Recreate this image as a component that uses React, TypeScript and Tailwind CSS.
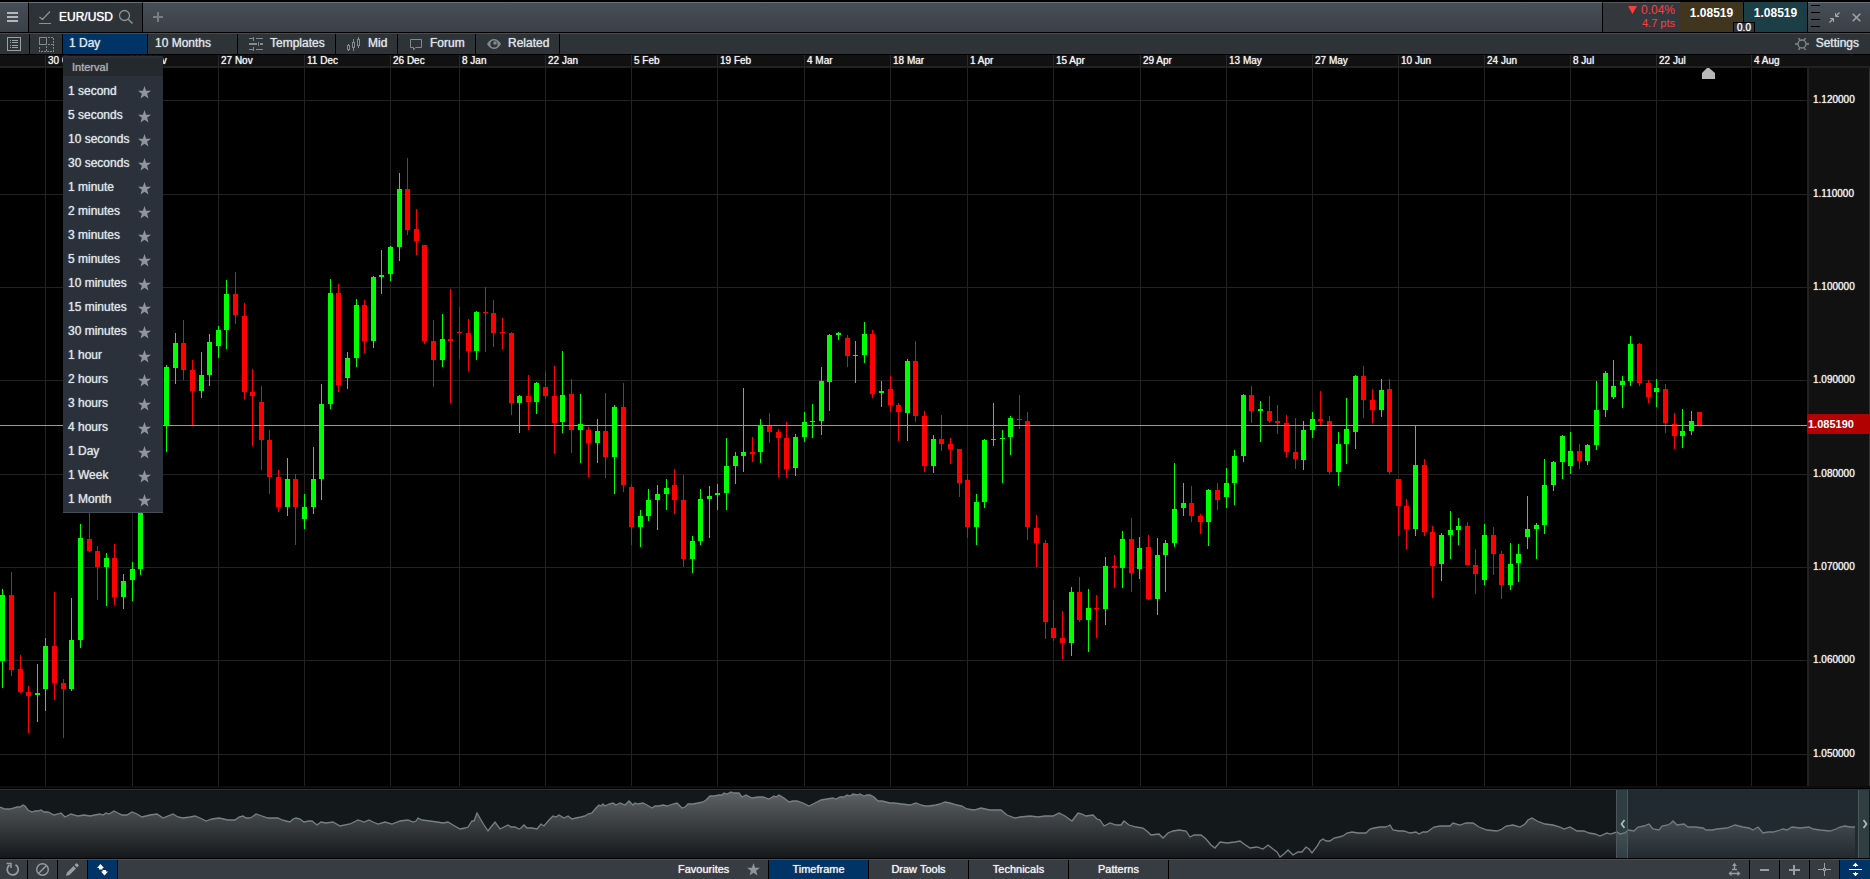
import React, { useState } from "react";

type Candle = { x: number; up: boolean; high: number; top: number; bottom: number; low: number };

const CHART_TOP = 68;
const CHART_WIDTH = 1807;
const CHART_HEIGHT = 718;

// direction,high,body top,body bottom,low
const CANDLE_DATA = `
g,589,595,661,688 r,572,595,670,676 r,655,669,692,693 r,686,692,696,733 g,664,693,695,722
g,638,646,689,711 r,592,646,683,700 r,679,683,689,738 g,598,640,689,691 g,524,538,640,648
r,500,539,551,552 r,546,551,567,600 g,553,558,567,606 r,544,558,597,605 g,574,581,597,609
g,562,569,580,601 g,476,490,569,575 r,420,450,470,490 g,400,425,460,480 g,365,367,425,452
g,333,343,368,384 r,320,343,370,380 r,360,370,391,425 g,352,375,391,398 g,334,342,375,386
g,326,330,346,358 g,280,294,330,349 r,272,294,315,324 r,303,316,392,399 r,369,392,396,446
r,386,402,440,470 r,430,440,477,494 r,470,477,507,512 g,458,479,507,516 r,474,479,507,545
g,494,507,519,529 g,447,479,507,514 g,384,404,479,500 g,279,293,404,409 r,284,293,385,392
g,352,358,378,389 g,299,305,358,367 r,300,305,341,353 g,276,277,341,348 g,250,275,277,294
g,246,247,274,281 g,173,189,247,261 r,158,189,230,235 r,209,229,241,255 r,245,245,341,344
r,320,341,360,387 g,314,339,360,367 r,289,339,341,403 r,307,332,333,359 r,319,333,351,371
g,311,312,351,360 r,287,312,313,352 r,300,313,333,347 r,318,332,333,349 r,332,333,403,415
g,395,396,403,433 r,375,396,402,430 g,382,383,402,414 r,372,387,396,399 r,366,396,423,454
g,351,395,422,433 r,379,394,430,453 g,394,424,430,463 r,427,430,443,477 g,419,431,443,463
r,393,431,457,478 g,405,407,457,494 r,383,407,485,492 r,484,487,527,545 g,510,516,527,547
g,489,500,516,521 g,485,494,500,530 g,479,488,494,510 r,469,485,500,514 r,475,500,559,567
g,536,541,559,573 g,489,499,541,545 g,486,496,499,538 g,484,493,495,510 g,438,466,493,510
g,452,456,466,484 g,388,452,456,472 r,437,452,454,462 g,419,425,452,463 r,413,426,432,443
r,429,432,438,477 r,422,438,469,478 g,434,437,468,476 g,412,422,437,442 g,404,421,422,438
g,367,381,421,435 g,334,335,382,411 g,332,333,335,340 r,335,338,356,367 g,341,355,356,383
g,322,334,355,363 r,330,334,394,398 g,381,391,393,407 r,376,389,405,412 r,403,405,412,441
g,359,361,413,441 r,341,361,416,422 r,411,416,466,472 g,435,439,466,473 r,415,439,444,451
r,438,444,449,464 r,449,449,483,497 r,474,480,527,538 g,494,502,527,545 g,439,440,502,508
g,403,439,440,446 g,430,438,439,483 g,416,418,437,455 r,395,419,420,429 r,412,421,527,540
r,515,528,543,567 r,540,543,622,639 r,600,628,638,641 r,611,638,643,659 g,587,592,643,656
r,577,592,620,622 g,589,608,620,652 r,595,608,609,638 g,557,566,609,625 r,555,566,568,588
g,531,539,568,588 r,518,539,573,592 g,537,548,569,579 r,535,547,599,600 g,538,555,599,615
g,540,543,555,592 g,463,509,543,547 g,483,503,508,516 r,486,503,516,522 r,514,516,522,534
g,489,490,522,546 r,483,490,500,510 g,468,483,497,508 g,450,456,483,505 g,394,395,456,462
r,386,395,411,423 g,401,409,411,442 r,396,411,421,423 r,405,421,423,434 r,415,423,452,457
r,418,452,459,469 g,421,430,460,470 g,412,419,430,438 r,391,419,421,425 r,416,421,472,474
g,432,444,472,486 g,398,429,444,464 g,375,376,432,449 r,366,376,400,418 r,389,400,410,423
g,379,390,410,417 r,379,389,472,474 r,479,479,506,536 r,499,506,529,549 g,426,465,529,536
r,459,465,532,536 r,526,532,566,598 g,533,535,564,581 g,511,530,535,559 g,518,526,530,545
r,522,526,565,565 r,549,565,574,594 g,524,535,580,585 r,527,535,554,575 r,551,554,585,599
g,543,564,585,590 g,544,554,563,582 g,496,529,537,549 g,523,525,529,559 g,459,485,525,534
g,461,462,485,491 g,435,436,462,479 g,432,451,466,474 r,444,451,461,469 g,444,445,461,465
g,381,410,445,450 g,371,373,410,417 g,360,386,397,399 g,376,381,385,408 g,336,344,381,386
r,343,344,383,386 r,380,383,397,403 g,379,388,392,407 r,384,389,423,433 r,413,424,436,449
g,409,431,436,448 g,411,421,431,435 r,412,412,425,425`;

const CANDLES: Candle[] = CANDLE_DATA.trim()
  .split(/\s+/)
  .map((entry, i) => {
    const [dir, high, top, bottom, low] = entry.split(",");
    return {
      x: Math.round(2.4 + i * 8.614),
      up: dir === "g",
      high: Number(high),
      top: Number(top),
      bottom: Number(bottom),
      low: Number(low),
    };
  });

const DATES: [number, string][] = [
  [45, "30 Oct"], [132, "13 Nov"], [218, "27 Nov"], [304, "11 Dec"], [390, "26 Dec"],
  [459, "8 Jan"], [545, "22 Jan"], [631, "5 Feb"], [717, "19 Feb"], [804, "4 Mar"],
  [890, "18 Mar"], [967, "1 Apr"], [1053, "15 Apr"], [1140, "29 Apr"], [1226, "13 May"],
  [1312, "27 May"], [1398, "10 Jun"], [1484, "24 Jun"], [1570, "8 Jul"], [1656, "22 Jul"],
  [1751, "4 Aug"],
];

const PRICES: [number, string][] = [
  [100, "1.120000"], [194, "1.110000"], [287, "1.100000"], [380, "1.090000"],
  [474, "1.080000"], [567, "1.070000"], [660, "1.060000"], [754, "1.050000"],
];

const DATE_COLUMNS = [DATES[0][0], ...DATES.map(([x], i) => (DATES[i + 1]?.[0] ?? 1870) - x)]
  .map((n) => `minmax(0,${n}fr)`)
  .join(" ");

const PRICE_ROWS = [
  PRICES[0][0] - CHART_TOP,
  ...PRICES.map(([y], i) => (PRICES[i + 1]?.[0] ?? CHART_TOP + CHART_HEIGHT) - y),
]
  .map((n) => `minmax(0,${n}fr)`)
  .join(" ");

const HISTORY: string = `
0,807 5,809 10,809 17,807 20,807 23,805 25,806 28,810 32,812 35,811 38,811 41,810 44,812 48,812 54,815 58,814 61,813 65,817
71,814 78,816 84,815 90,816 95,815 100,814 103,815 106,813 109,814 114,811 118,813 122,815 127,815 132,812 137,814 142,817 150,815 157,814 163,818
173,814 178,817 183,818 190,817 195,816 200,818 206,821 212,819 219,818 228,820 235,820 239,817 243,816 246,818 249,818 252,817 256,814 262,816
268,818 273,818 278,818 282,820 286,821 290,822 293,819 296,818 300,819 304,822 309,821 312,821 317,825 321,822 326,823 333,822 340,826 350,824
358,820 364,822 369,820 373,822 378,824 385,822 392,824 400,821 408,820 413,822 416,821 418,818 422,820 430,821 437,822 443,823 448,822 453,825
460,829 465,828 468,827 472,821 474,821 477,813 481,820 484,825 488,831 491,827 495,822 500,829 508,825 511,827 515,827 519,829 521,828 524,825
527,828 532,828 537,829 541,824 544,826 549,820 553,816 556,817 559,815 564,818 568,816 572,819 576,818 581,817 585,816 588,814 592,813 596,808
599,805 601,806 603,804 605,806 609,804 613,803 616,805 620,803 625,805 629,801 633,805 635,803 638,804 643,803 647,805 652,808 655,806 659,806 663,805
667,806 673,804 677,803 682,808 685,807 688,804 693,804 698,803 703,802 706,800 710,796 714,796 719,795 722,795 724,793 727,794 731,792 734,793 739,793
742,797 746,795 752,798 758,797 763,797 769,799 774,796 776,797 779,795 784,798 789,802 793,801 797,801 803,803 809,806 815,803 821,800 827,799 833,798
836,799 840,797 844,797 847,795 850,796 853,794 857,795 860,794 864,796 867,795 870,795 874,797 878,801 882,801 890,803 894,803 902,804 910,805 916,803
921,805 925,806 929,806 936,805 940,804 945,802 950,803 957,805 962,806 967,809 974,810 981,808 990,810 1001,810 1007,815 1015,818 1020,817 1030,816
1038,817 1045,816 1053,816 1059,813 1065,816 1072,821 1078,813 1082,814 1086,816 1093,815 1097,819 1100,820 1104,826 1110,823 1116,825 1121,825
1124,821 1129,825 1136,827 1143,828 1148,832 1151,835 1159,834 1163,838 1168,833 1173,831 1179,830 1186,831 1190,837 1194,835 1201,835 1206,839
1211,845 1215,848 1220,842 1227,843 1235,842 1240,841 1244,844 1250,848 1257,847 1263,849 1268,845 1273,849 1277,852 1280,857 1284,854 1288,850
1293,855 1298,852 1302,852 1306,847 1309,849 1312,853 1318,845 1320,841 1323,839 1326,841 1330,841 1334,838 1339,837 1343,836 1347,833 1352,832
1358,833 1366,833 1370,829 1374,828 1380,827 1385,827 1388,826 1390,825 1393,830 1399,831 1404,831 1410,833 1416,832 1419,834 1423,832 1427,832
1434,827 1440,826 1447,826 1450,826 1453,823 1460,825 1466,823 1473,823 1479,827 1487,830 1497,831 1502,829 1506,826 1513,825 1520,827 1525,824
1528,820 1532,818 1537,821 1545,824 1553,825 1560,827 1564,829 1570,827 1577,831 1584,831 1589,833 1595,834 1600,836 1607,833 1610,834 1617,832
1620,834 1625,833 1628,830 1634,831 1636,829 1638,827 1644,826 1649,824 1653,829 1659,830 1662,826 1668,825 1671,823 1673,821 1677,825 1684,824
1688,827 1695,827 1703,828 1706,830 1712,830 1717,829 1727,828 1735,825 1743,827 1749,828 1753,830 1758,827 1763,833 1768,832 1773,832 1780,830
1783,829 1787,830 1792,827 1800,828 1809,827 1813,829 1820,830 1830,831 1836,829 1840,827 1845,826 1850,827 1855,827`
  .trim()
  .replace(/\s+/g, " ");

const INTERVALS = [
  "1 second", "5 seconds", "10 seconds", "30 seconds", "1 minute", "2 minutes", "3 minutes",
  "5 minutes", "10 minutes", "15 minutes", "30 minutes", "1 hour", "2 hours", "3 hours",
  "4 hours", "1 Day", "1 Week", "1 Month",
];

function Star() {
  return (
    <svg width="13" height="13" viewBox="0 0 13 13" fill="#8f959a" aria-hidden="true">
      <path d="M6.5 0 8.1 4.7H13L9.1 7.7 10.5 12.6 6.5 9.7 2.5 12.6 3.9 7.7 0 4.7H4.9Z" />
    </svg>
  );
}

function TabBar() {
  return (
    <header className="flex h-[30px] shrink-0 bg-linear-to-b from-[#484e57] to-[#3a4048]">
      <button aria-label="Menu" className="flex w-[29px] items-center justify-center border-t border-r border-t-[#68717b] border-r-black pr-1">
        <svg width="11" height="11" viewBox="0 0 11 11" fill="#b4b7ba" shapeRendering="crispEdges">
          <path d="M0 0h11v2H0zM0 4h11v2H0zM0 8h11v2H0z" />
        </svg>
      </button>
      <div className="flex w-[114px] items-center border-t border-r border-t-[#68717b] border-r-black bg-[#2e3338] pb-px pl-[9px]">
        <svg width="15" height="15" viewBox="0 0 15 15" fill="none" stroke="#8d9195">
          <path d="M1.5 7 4.5 9.5 12 1.5" strokeWidth="1.2" />
          <path d="M1 13.5h12" />
          <circle cx="4.5" cy="9" r="1" fill="#8d9195" stroke="none" />
        </svg>
        <span className="ml-[6px] text-xs text-white">EUR/USD</span>
        <button aria-label="Search" className="ml-[5px]">
          <svg width="16" height="16" viewBox="0 0 16 16" fill="none" stroke="#8d9195">
            <circle cx="6.5" cy="6.5" r="5" strokeWidth="1.3" />
            <path d="M10.2 10.2 14.5 14.5" strokeWidth="1.6" />
          </svg>
        </button>
      </div>
      <div className="flex flex-1 items-center border-t border-[#68717b] pb-px pl-[10px]">
        <button aria-label="New tab">
          <svg width="10" height="10" viewBox="0 0 10 10" fill="#777d84" shapeRendering="crispEdges">
            <path d="M4 0h2v4h4v2H6v4H4V6H0V4h4z" />
          </svg>
        </button>
      </div>
      <div className="flex w-[78px] flex-col items-end border-t border-l border-t-[#55595d] border-l-black bg-[#34383c] pr-[5px] text-[#ff3d3d] [text-shadow:none]">
        <span className="flex h-[14px] items-center gap-1 text-xs">
          <svg width="9" height="8" viewBox="0 0 9 8" fill="#ff3d3d" aria-hidden="true">
            <path d="M0 0h9L4.5 8z" />
          </svg>
          0.04%
        </span>
        <span className="h-[13px] text-[11px] leading-[13px]">4.7 pts</span>
      </div>
      <div className="relative flex text-xs font-bold text-white">
        <button className="w-16 border-r border-black bg-[#40351f] pb-[9px] [text-shadow:none]">1.08519</button>
        <button className="w-16 border-r border-black bg-[#1c3e47] pb-[9px] [text-shadow:none]">1.08519</button>
        <span className="absolute top-5 left-[53px] h-[10px] w-[22px] border border-b-0 border-black bg-[#2b323b] text-center text-[10px] leading-[10px] font-normal">
          0.0
        </span>
      </div>
      <div className="flex w-[62px] items-center border-t border-[#68717b] pl-[3px]">
        <svg width="9" height="28" viewBox="0 0 9 28" fill="#000" shapeRendering="crispEdges" aria-hidden="true">
          <path d="M0 1h9v1H0zM0 8h9v1H0zM0 15h9v1H0zM0 22h9v1H0z" />
        </svg>
        <button aria-label="Restore" className="ml-[9px]">
          <svg width="11" height="11" viewBox="0 0 11 11" fill="none" stroke="#a3a8ac">
            <path d="M10.5.5 7 4M.5 10.5 4 7" strokeWidth="1.4" />
            <path d="M6.5 1v3.5H10M1 6.5h3.5V10" />
          </svg>
        </button>
        <button aria-label="Close" className="ml-[12px]">
          <svg width="9" height="9" viewBox="0 0 9 9" stroke="#a3a8ac" strokeWidth="1.4">
            <path d="M.7.7 8.3 8.3M8.3.7.7 8.3" />
          </svg>
        </button>
      </div>
    </header>
  );
}

function ToolButton({ width, label, children }: { width: string; label: string; children: React.ReactNode }) {
  return (
    <button className={`flex items-center gap-[7px] border-r border-black pl-[11px] ${width}`}>
      {children}
      <span className="pb-[2px]">{label}</span>
    </button>
  );
}

function IntervalMenu() {
  return (
    <div role="menu" className="absolute top-[22px] left-0 z-10 w-[100px] border-b border-[#454c56] bg-[#2a313b] pt-[2px] pb-px">
      <div className="mb-[3px] h-[18px] bg-[#25292e] pl-[9px] text-[11px] leading-[18px] text-[#a9adb0]">Interval</div>
      {INTERVALS.map((name) => (
        <div key={name} className="flex h-6 items-center justify-between pr-3 pl-[5px]">
          <button role="menuitem">{name}</button>
          <button aria-label={`Favourite ${name}`} className="pt-[2px]">
            <Star />
          </button>
        </div>
      ))}
    </div>
  );
}

function Toolbar() {
  const [open, setOpen] = useState(true);
  return (
    <nav className="my-px flex h-[21px] shrink-0 border-t border-[#454b50] bg-[#2d3337] text-xs text-[#dce3e6]">
      <button aria-label="Watchlist" className="flex w-[30px] items-center justify-center border-r border-black pr-px">
        <svg width="14" height="14" viewBox="0 0 14 14" shapeRendering="crispEdges">
          <path d="M.5.5h13v13H.5z" fill="none" stroke="#9ba0a3" />
          <path d="M3 3h1v1H3zM5 3h6v1H5zM3 5h1v1H3zM5 5h6v1H5zM3 8h1v1H3zM5 8h6v1H5zM3 10h1v1H3zM5 10h6v1H5z" fill="#9ba0a3" />
        </svg>
      </button>
      <button aria-label="Layout" className="flex w-[33px] items-center justify-center border-r border-black">
        <svg width="15" height="15" viewBox="0 0 15 15" fill="none" stroke="#85898c" shapeRendering="crispEdges">
          <path d="M.5.5h7v7h-7z" />
          <path d="M9 .5h5.5V14.5H.5V9M7.5 9v5M9 7.5h5" strokeDasharray="2 1" />
        </svg>
      </button>
      <div className="relative flex w-[85px] border-r border-black">
        <button aria-expanded={open} onClick={() => setOpen(!open)} className="w-full bg-[#003366] pb-[2px] pl-[6px] text-left">
          1 Day
        </button>
        {open && <IntervalMenu />}
      </div>
      <button className="w-[90px] border-r border-black pb-[2px] pl-[7px] text-left">10 Months</button>
      <ToolButton width="w-[98px]" label="Templates">
        <svg width="14" height="14" viewBox="0 0 14 14" fill="#85898c" shapeRendering="crispEdges">
          <path d="M0 1h4v1H0zM4 0h1v4H4zM7 1h7v1H7zM0 6h8v2H0zM9 5h1v4H9zM11 6h3v2h-3zM0 12h4v1H0zM4 10h1v4H4zM7 12h7v1H7z" />
        </svg>
      </ToolButton>
      <ToolButton width="w-[62px]" label="Mid">
        <svg width="14" height="14" viewBox="0 0 14 14" fill="none" stroke="#85898c" shapeRendering="crispEdges">
          <path d="M.5 8.5h2v4h-2zM5.500 5.500h2v5h-2zM10.500 2.500h2v6h-2zM1.500 7v1M1.500 13v1M6.500 2v3M6.500 11v3M11.500 0v2M11.500 9v2" />
        </svg>
      </ToolButton>
      <ToolButton width="w-[78px]" label="Forum">
        <svg width="14" height="14" viewBox="0 0 14 14" fill="none" stroke="#85898c">
          <path d="M1.5 2.500h11v8H6.500l-2 2.500v-2.500h-3z" />
        </svg>
      </ToolButton>
      <ToolButton width="w-[84px]" label="Related">
        <svg width="14" height="14" viewBox="0 0 14 14">
          <path d="M0 7Q3 2 7 2T14 7Q11 12 7 12T0 7Z" fill="#85898c" />
          <circle cx="7" cy="7" r="3.600" fill="#2d3337" />
          <circle cx="8" cy="6" r="1.800" fill="#85898c" />
        </svg>
      </ToolButton>
      <button className="ml-auto flex items-center gap-[7px] pr-[11px]">
        <svg width="14" height="14" viewBox="0 0 14 14" fill="none" stroke="#85898c">
          <circle cx="7" cy="7" r="4" strokeWidth="1.300" />
          <path d="M0 7h3M11 7h3M3.500 1l1.500 2.500M10.500 1 9 3.500M3.500 13 5 10.500M10.500 13 9 10.500" strokeWidth="1.400" />
        </svg>
        <span className="pb-[2px]">Settings</span>
      </button>
    </nav>
  );
}

function DateAxis() {
  return (
    <div
      className="grid h-[13px] shrink-0 overflow-hidden border-b-2 border-[#222] bg-[#111] text-[10px] leading-[11px] text-[#f2f2f2]"
      style={{ gridTemplateColumns: DATE_COLUMNS }}
    >
      <span />
      {DATES.map(([x, label]) => (
        <span key={x} className="border-l border-[#2a2a2a] pl-[2px] whitespace-nowrap">
          {label}
        </span>
      ))}
    </div>
  );
}

function CandleChart() {
  return (
    <svg
      role="img"
      aria-label="EUR/USD daily candles"
      className="h-full min-w-0 flex-1 bg-black"
      viewBox={`0 ${CHART_TOP} ${CHART_WIDTH} ${CHART_HEIGHT}`}
      preserveAspectRatio="none"
      shapeRendering="crispEdges"
    >
      {PRICES.map(([y]) => (
        <rect key={y} x={0} y={y} width={CHART_WIDTH} height={1} fill="#222" />
      ))}
      {DATES.map(([x]) => (
        <rect key={x} x={x} y={CHART_TOP} width={1} height={CHART_HEIGHT} fill="#222" />
      ))}
      {CANDLES.map((c) => (
        <g key={c.x} fill={c.up ? "#00ff00" : "#ff0000"}>
          <rect x={c.x} y={c.high} width={1} height={c.low - c.high} />
          <rect x={c.x - 2} y={c.top} width={5} height={c.bottom - c.top} />
        </g>
      ))}
      <rect x={0} y={425} width={CHART_WIDTH} height={1} fill="#999" />
      <path d="M1702 79V73L1708 67L1715 73V79Z" fill="#b8b8b8" shapeRendering="auto" />
    </svg>
  );
}

function PriceAxis() {
  return (
    <div className="relative w-[63px] shrink-0 border-r border-l-2 border-r-[#333] border-l-[#222] bg-[#111]">
      <div className="grid h-full text-[10px] leading-[12px] text-[#f2f2f2]" style={{ gridTemplateRows: PRICE_ROWS }}>
        <span />
        {PRICES.map(([y, label]) => (
          <div key={y} className="flex items-start gap-px border-t border-transparent">
            <span className="-mt-px h-px w-[3px] bg-[#222]" />
            <span className="-mt-[7px]">{label}</span>
          </div>
        ))}
      </div>
      <span className="absolute top-[48.2%] -right-px -left-[2px] h-5 rounded-[2px] bg-[#b30000] pl-px text-[11px] leading-5 font-bold text-white [text-shadow:none]">
        1.085190
      </span>
    </div>
  );
}

function Navigator() {
  return (
    <section aria-label="History range" className="shrink-0 border-t-2 border-b border-t-[#0d0d0d] border-b-black">
      <div className="mt-px h-[69px] border-t border-[#2b3034] bg-[#13181b]">
        <svg className="h-full w-full" viewBox="0 790 1870 68" preserveAspectRatio="none">
          <defs>
            <linearGradient id="history" gradientUnits="userSpaceOnUse" x1="0" y1="790" x2="0" y2="858">
              <stop offset="0" stopColor="#626568" />
              <stop offset="0.5" stopColor="#3b3e41" />
              <stop offset="1" stopColor="#15181b" />
            </linearGradient>
          </defs>
          <path d={`M0,858 L${HISTORY} 1855,858Z`} fill="url(#history)" />
          <polyline points={HISTORY} fill="none" stroke="#7b7f82" strokeWidth="1.3" />
          <rect x="1616" y="790" width="253" height="68" fill="#5b7488" fillOpacity="0.2" />
          <g shapeRendering="crispEdges">
            <rect x="1616" y="790" width="12" height="68" fill="#5f8a88" fillOpacity="0.22" />
            <rect x="1858" y="790" width="11" height="68" fill="#5f8a88" fillOpacity="0.22" />
            <path d="M1616 790h1v68h-1zM1627 790h1v68h-1zM1858 790h1v68h-1z" fill="#4c585d" />
          </g>
          <path d="M1624.500 820 1621.500 824 1624.500 828M1863.500 820 1866.500 824 1863.500 828" fill="none" stroke="#b9bdbf" strokeWidth="1.600" />
        </svg>
      </div>
    </section>
  );
}

function FooterIcon({ label, active, last, children }: { label: string; active?: boolean; last?: boolean; children: React.ReactNode }) {
  return (
    <button
      aria-label={label}
      className={`flex w-[30px] items-center justify-center ${last ? "" : "border-r border-black"} ${active ? "bg-[#003366]" : ""}`}
    >
      <svg width="15" height="15" viewBox="0 0 15 15" fill="none" stroke={active ? "#fff" : "#999da0"}>
        {children}
      </svg>
    </button>
  );
}

function Footer() {
  return (
    <footer className="flex h-5 shrink-0 justify-between border-t border-[#4b5055] bg-[#373b42] text-[11px] text-[#f0f2f3]">
      <div className="-ml-[2px] flex">
        <FooterIcon label="Reset">
          <path d="M10.500 2.700A5.500 5.500 0 1 1 4.500 3" strokeWidth="1.700" />
          <path d="M1.500 1.500h4.500v4.500" strokeWidth="1.500" />
        </FooterIcon>
        <FooterIcon label="Clear">
          <circle cx="7.500" cy="7.500" r="5.800" strokeWidth="1.400" />
          <path d="M3.800 11.200 11.200 3.800" strokeWidth="1.400" />
        </FooterIcon>
        <FooterIcon label="Draw">
          <path d="M1 14 2 10.500 8.500 4 11 6.500 4.500 13ZM9.500 3 11 1.500Q11.700 1 12.500 1.700L13.300 2.500Q14 3.300 13.500 4L12 5.500Z" fill="#999da0" stroke="none" />
        </FooterIcon>
        <FooterIcon label="Toggle panel" active>
          <path d="M2 6 5.500 2 9 6ZM4 6h3.500v1.500H4zM6 9.500h7L9.500 13.500ZM7.500 8h3.500v1.500H7.500z" fill="#fff" stroke="none" />
        </FooterIcon>
      </div>
      <div className="flex">
        <button className="flex w-[100px] items-center justify-between border-r border-black pr-2 pl-[9px]">
          Favourites
          <Star />
        </button>
        <button className="w-[100px] border-r border-black bg-[#003366]">Timeframe</button>
        <button className="w-[100px] border-r border-black">Draw Tools</button>
        <button className="w-[100px] border-r border-black">Technicals</button>
        <button className="w-[100px] border-r border-black">Patterns</button>
      </div>
      <div className="flex">
        <FooterIcon label="Auto scale">
          <path d="M7.500 1.500v6M5 7.500h5M3 11.500h9" strokeWidth="1.400" />
          <path d="M5 4 7.500 1 10 4ZM4.500 8.800v5.400L1.500 11.500ZM10.500 8.800v5.400L13.500 11.500Z" fill="#999da0" stroke="none" />
        </FooterIcon>
        <FooterIcon label="Zoom out">
          <path d="M3 7h9v2H3z" fill="#999da0" stroke="none" />
        </FooterIcon>
        <FooterIcon label="Zoom in">
          <path d="M2 7h4V3h2v4h5v2H8v4H6V9H2z" fill="#999da0" stroke="none" />
        </FooterIcon>
        <FooterIcon label="Crosshair">
          <path d="M1 7.500h5M9 7.500h5M7.500 1v5M7.500 9v5M6.500 6.500h2v2h-2z" shapeRendering="crispEdges" />
        </FooterIcon>
        <FooterIcon label="Fit vertically" active last>
          <path d="M1 7.500h13M7.500 2v3M7.500 10v3" shapeRendering="crispEdges" />
          <path d="M4.500 4 7.500 .8 10.500 4ZM4.500 11 7.500 14.200 10.500 11Z" fill="#fff" stroke="none" />
        </FooterIcon>
      </div>
    </footer>
  );
}

export default function App() {
  return (
    <div className="flex h-screen flex-col overflow-hidden bg-black pt-[2px] font-['Liberation_Sans',Arial,sans-serif] [text-shadow:0_0_1px_currentColor] [&_nav_button]:[text-shadow:0_0_1px_currentColor] [&_footer_button]:[text-shadow:0_0_1px_currentColor]">
      <TabBar />
      <Toolbar />
      <DateAxis />
      <main className="flex min-h-0 flex-1">
        <CandleChart />
        <PriceAxis />
      </main>
      <Navigator />
      <Footer />
    </div>
  );
}
